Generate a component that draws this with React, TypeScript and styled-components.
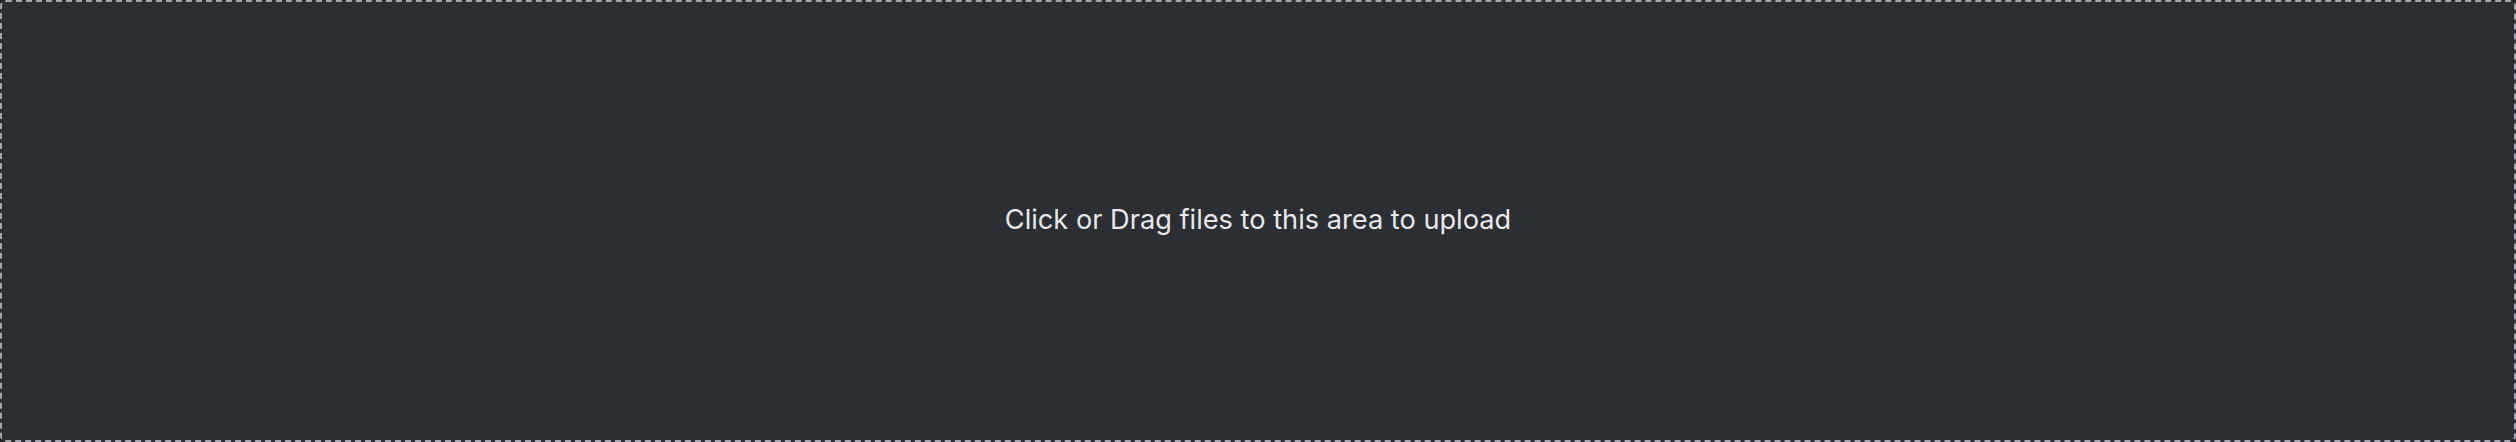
import React from "react";
import styled, { createGlobalStyle } from "styled-components";

const Global = createGlobalStyle`
  html, body { margin: 0; padding: 0; background: #1f2125; }
  * { box-sizing: border-box; }
`;

const DropZone = styled.div`
  width: 2516px;
  height: 442px;
  border: 2px dashed #a3a7ae;
  border-radius: 6px;
  background: #2b2e33;
  display: flex;
  align-items: center;
  justify-content: center;
  padding-bottom: 1px;
  cursor: pointer;
`;

const Hint = styled.span`
  font-family: Inter, "Noto Sans", sans-serif;
  font-size: 27.2px;
  line-height: 1.2;
  color: #e8e8ea;
`;

export default function App() {
  return (
    <>
      <Global />
      <DropZone>
        <Hint>Click or Drag files to this area to upload</Hint>
      </DropZone>
    </>
  );
}
